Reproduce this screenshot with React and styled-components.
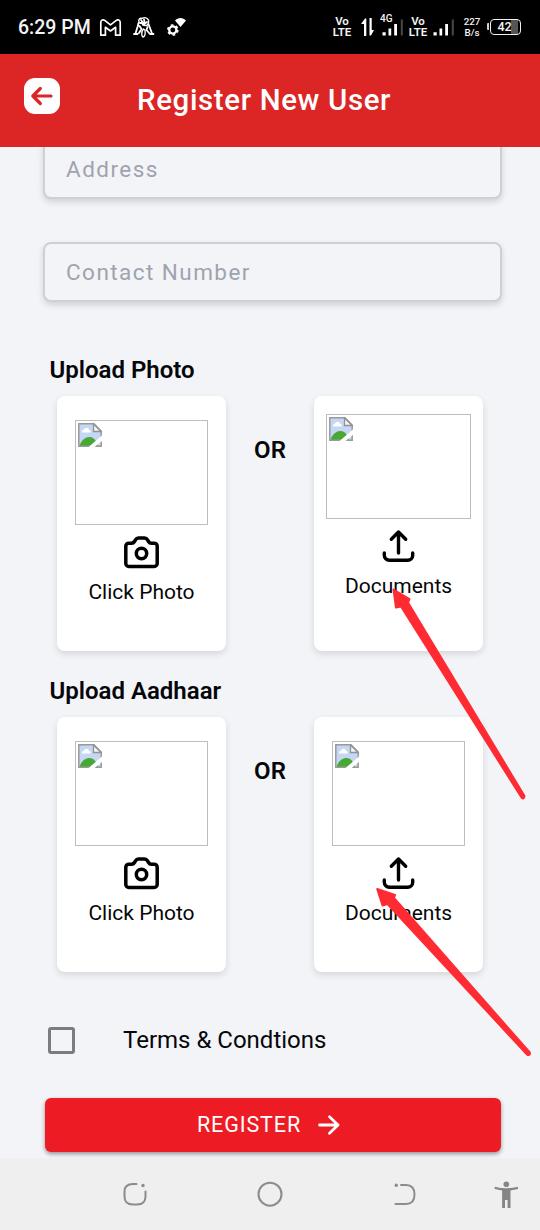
import React from 'react';
import styled, { createGlobalStyle } from 'styled-components';

const Global = createGlobalStyle`
  * { box-sizing: border-box; }
  body { margin: 0; background: #f3f4f8; font-family: Roboto, "Liberation Sans", sans-serif; color: #050608; }
  svg { display: block; flex: none; overflow: visible; }
`;

const Screen = styled.div`
  position: relative;
  width: 540px;
  height: 1230px;
  display: flex;
  flex-direction: column;
  overflow: hidden;
  background: #f3f4f8;
`;

const StatusBar = styled.div`
  height: 54px;
  flex: none;
  display: flex;
  align-items: center;
  justify-content: space-between;
  padding: 0 19px 0 18px;
  background: #000;
  color: #f4f4f4;
`;

const StatusGroup = styled.div`
  display: flex;
  align-items: center;
`;

const Clock = styled.span`
  width: 82px;
  font-size: 19.5px;
  font-weight: 500;
  line-height: 24px;
  white-space: nowrap;
  padding-top: 1px;
`;

const Glyph = styled.svg`
  margin-right: ${(p) => p.$gap || 0}px;
`;

const Volte = styled.span`
  width: 20px;
  margin-right: ${(p) => p.$gap}px;
  display: flex;
  flex-direction: column;
  align-items: center;
  font-size: 11.5px;
  font-weight: 600;
  line-height: 11px;
`;

const Signal = styled.div`
  position: relative;
  margin-right: ${(p) => p.$gap}px;
`;

const Generation = styled.span`
  position: absolute;
  left: -2px;
  top: -3px;
  font-size: 10px;
  font-weight: 500;
  line-height: 10px;
`;

const Speed = styled.span`
  width: 18px;
  margin-right: 9px;
  font-size: 9.8px;
  font-weight: 500;
  line-height: 11.5px;
  text-align: center;
`;

const Battery = styled.span`
  position: relative;
  width: 31px;
  height: 16px;
  border: 1.5px solid #f0f0f0;
  border-radius: 4px;
  background: linear-gradient(90deg, #000 0 70%, #555 70% 92%, #000 92%);
  font-size: 12.5px;
  font-weight: 500;
  line-height: 14px;
  padding-right: 2px;
  text-align: center;
  &::before {
    content: "";
    position: absolute;
    left: -4px;
    top: 3px;
    width: 2px;
    height: 7px;
    border-radius: 1px 0 0 1px;
    background: #d0d0d0;
  }
`;

const Header = styled.header`
  height: 93px;
  flex: none;
  display: flex;
  align-items: flex-start;
  padding: 24px;
  background: #dc2626;
`;

const BackButton = styled.button`
  width: 36px;
  height: 36px;
  padding: 0;
  border: 0;
  border-radius: 11px;
  background: #fff;
`;

const Title = styled.h1`
  margin: 5px 0 0 77px;
  font-size: 29.4px;
  font-weight: 500;
  line-height: 34px;
  letter-spacing: 0.66px;
  color: #fff;
  white-space: nowrap;
`;

const Content = styled.main`
  flex: 1;
  min-height: 0;
  overflow: hidden;
  display: flex;
  flex-direction: column;
`;

const Fields = styled.div`
  display: flex;
  flex-direction: column;
  gap: 43px;
  margin: -8px 38px 0 43px;
`;

const Field = styled.input`
  width: 100%;
  height: 60px;
  padding: 0 21px 1px;
  border: 2px solid #cfd0d5;
  border-radius: 8px;
  outline: 0;
  background: #f3f4f8;
  box-shadow: 0 3px 6px rgba(0, 0, 0, 0.14);
  font: 400 22.5px/30px Roboto, sans-serif;
  letter-spacing: 1.45px;
  &::placeholder { color: #9ea3ae; opacity: 1; }
`;

const Upload = styled.section`
  margin-top: ${(p) => p.$top}px;
  padding-left: 50px;
`;

const SectionTitle = styled.h2`
  margin: 0 0 0 -0.5px;
  font-size: 24px;
  font-weight: 600;
  line-height: 30px;
  white-space: nowrap;
`;

const Choices = styled.div`
  display: flex;
  margin: 11px 0 0 7px;
`;

const Card = styled.div`
  width: 169px;
  height: 255px;
  padding-top: ${(p) => p.$top}px;
  display: flex;
  flex-direction: column;
  align-items: center;
  border-radius: 8px;
  background: #fff;
  box-shadow: 0 3px 7px rgba(0, 0, 0, 0.12);
`;

const Or = styled.span`
  width: 88px;
  padding-top: 39px;
  font-size: 24px;
  font-weight: 600;
  line-height: 30px;
  text-align: center;
`;

const Preview = styled.div`
  width: ${(p) => p.$width}px;
  height: 105px;
  padding: 2px;
  border: 1.5px solid #bdbdbd;
`;

const ActionIcon = styled.svg`
  margin-top: 6px;
`;

const CardLabel = styled.span`
  margin-top: 10px;
  font-size: 21px;
  line-height: 26px;
  white-space: nowrap;
`;

const Terms = styled.label`
  height: 30px;
  margin: 53px 0 0 48px;
  display: flex;
  align-items: center;
  gap: 48px;
  font-size: 24px;
  line-height: 30px;
`;

const Checkbox = styled.input`
  appearance: none;
  width: 27px;
  height: 27px;
  margin: 0;
  border: 3px solid #7b7c80;
  border-radius: 3px;
`;

const Register = styled.button`
  height: 54px;
  flex: none;
  margin: 43px 39px 0 45px;
  padding: 0 9px 0 0;
  display: flex;
  align-items: center;
  justify-content: center;
  gap: 17px;
  border: 0;
  border-radius: 6px;
  background: #ed1c24;
  box-shadow: 0 2px 4px rgba(0, 0, 0, 0.4);
  color: #fff;
  font: 400 21.5px/28px Roboto, sans-serif;
  letter-spacing: 0.9px;
`;

const NavBar = styled.nav`
  height: 72px;
  flex: none;
  display: flex;
  align-items: center;
  padding-left: 121px;
  background: #efefef;
`;

const Annotations = styled.svg`
  position: absolute;
  inset: 0;
  pointer-events: none;
`;

const BrokenImage = () => (
  <svg width="24" height="24" viewBox="0 0 24 24">
    <path d="M.8.8H16l7.2 7.2v15.2H.8z" fill="#c5d7f5" />
    <path d="M4 9.500C3.500 7.500 5 6.500 6 6.800 6.500 4 11 4 11 7c2-.3 2.500 2.500.7 2.500z" fill="#fff" />
    <path d="M1.600 23C3 17 8 13.500 12 14c3 .3 6 2 8 9z" fill="#47a832" />
    <path d="M.8.8H16l7.200 7.200v15.200H.8z" fill="none" stroke="#9a9a9a" strokeWidth="1.500" />
    <path d="M15.500 1v7.500H23z" fill="#f6f6f6" stroke="#929292" strokeWidth="1.300" />
    <path d="M10 24.500 24.500 12V17.500L16 24.500z" fill="#fff" />
  </svg>
);

const CameraIcon = () => (
  <ActionIcon width="35" height="38" viewBox="0.5 0 35 38" fill="none" stroke="#000" strokeWidth="3.500" strokeLinejoin="round">
    <path d="M5.300 12.200H8c1.500 0 2.300-.5 3-1.700l1-1.700c.7-1.200 1.500-1.700 3-1.700h6c1.500 0 2.300.5 3 1.700l1 1.700c.7 1.200 1.500 1.700 3 1.700h2.700a3 3 0 0 1 3 3v17.300a3 3 0 0 1-3 3H5.300a3 3 0 0 1-3-3V15.200a3 3 0 0 1 3-3z" />
    <circle cx="18" cy="22.500" r="5.200" />
  </ActionIcon>
);

const UploadIcon = () => (
  <ActionIcon width="35" height="38" viewBox="0.5 0 35 38" fill="none" stroke="#000" strokeWidth="3.400" strokeLinecap="round" strokeLinejoin="round">
    <path d="M18 28V7M10.800 14.200 18 7l7.200 7.200M3.800 28v2.200a5 5 0 0 0 5 5h18.400a5 5 0 0 0 5-5V28" />
  </ActionIcon>
);

function UploadGroup({ title, top, documentTop, documentWidth }) {
  return (
    <Upload $top={top}>
      <SectionTitle>{title}</SectionTitle>
      <Choices>
        <Card $top={24}>
          <Preview $width={133}><BrokenImage /></Preview>
          <CameraIcon />
          <CardLabel>Click Photo</CardLabel>
        </Card>
        <Or>OR</Or>
        <Card $top={documentTop}>
          <Preview $width={documentWidth}><BrokenImage /></Preview>
          <UploadIcon />
          <CardLabel>Documents</CardLabel>
        </Card>
      </Choices>
    </Upload>
  );
}

const Bars = () => (
  <svg width="21" height="20" viewBox="0 0 21 20">
    <path d="M.500 15.300h3.200v3.200H.500zM6.500 11.500h2.700v7H6.500zM12.200 7h2.800v11.500h-2.800z" fill="#fff" />
    <path d="M18.800 2.500h2v16h-2z" fill="#484848" />
  </svg>
);

export default function App() {
  return (
    <>
      <Global />
      <Screen>
        <StatusBar>
          <StatusGroup>
            <Clock>6:29 PM</Clock>
            <Glyph $gap={12} width="21" height="17" viewBox="0 0 21 17" fill="none" stroke="#fff" strokeWidth="1.700" strokeLinejoin="round">
              <path d="M.8 3.200C.8.800 3.200.200 4.700 1.400l5.800 4.500 5.800-4.500c1.500-1.200 3.900-.6 3.900 1.800v13h-4.600V8.300L10.500 12 5.400 8.300v7.900H.8z" />
            </Glyph>
            <Glyph $gap={13} width="21" height="21" viewBox="0 0 21 21" fill="none" stroke="#fff" strokeWidth="1.400" strokeLinecap="round" strokeLinejoin="round">
              <path d="M6 5C5 2.500 7 .5 9 1.500 12-.5 16.500 1.500 15.500 5.500c0 3-2.500 3.500-4.500 2.500z" />
              <path d="M8 3 9.500 5M11 2.500 11.500 5M7 6h3.500M10 8l4-3" strokeWidth="1.800" />
              <path d="M5.500 6 4.500 10 2.500 16.500M1 17h3.500M6.500 9l2 3-2.500 4M15.500 7l1.500 4 2 5.500M17 17h3.500M14.500 10 13.500 13l3 3.500" strokeWidth="1.800" />
              <path d="M10.500 12c-2 2-2.500 7-.5 8 2-.5 2.500-3 2-7z" />
            </Glyph>
            <Glyph width="20" height="20" viewBox="0 0 20 20">
              <path d="M8 3.500c3-3.500 8-3.500 11 0L13.500 10z" fill="#fff" />
              <circle cx="5.800" cy="13" r="3.600" fill="none" stroke="#fff" strokeWidth="2.300" />
              <circle cx="5.800" cy="13" r="5" fill="none" stroke="#fff" strokeWidth="1.700" strokeDasharray="2.600 2.636" />
            </Glyph>
          </StatusGroup>
          <StatusGroup>
            <Volte $gap={9}><span>Vo</span><span>LTE</span></Volte>
            <Glyph $gap={8} width="13" height="18" viewBox="0 0 13 18" fill="#fff">
              <path d="M3 18V6H0L4 .5H5.300V18zM8.500 0h2.200v12h2.300l-3 5.500H8.500z" />
            </Glyph>
            <Signal $gap={5}><Generation>4G</Generation><Bars /></Signal>
            <Volte $gap={5}><span>Vo</span><span>LTE</span></Volte>
            <Signal $gap={9}><Bars /></Signal>
            <Speed>227<br />B/s</Speed>
            <Battery>42</Battery>
          </StatusGroup>
        </StatusBar>
        <Header>
          <BackButton aria-label="Back">
            <svg width="36" height="36" viewBox="0 0 36 36" fill="none" stroke="#dc2626" strokeWidth="3.200" strokeLinecap="round" strokeLinejoin="round">
              <path d="M27 18H8.800M16.300 10.500 8.800 18l7.500 7.500" />
            </svg>
          </BackButton>
          <Title>Register New User</Title>
        </Header>
        <Content>
          <Fields>
            <Field placeholder="Address" />
            <Field placeholder="Contact Number" />
          </Fields>
          <UploadGroup title="Upload Photo" top={53} documentTop={18} documentWidth={145} />
          <UploadGroup title="Upload Aadhaar" top={25} documentTop={24} documentWidth={133} />
          <Terms><Checkbox type="checkbox" />Terms &amp; Condtions</Terms>
          <Register>
            REGISTER
            <svg width="22" height="20" viewBox="0 0 22 20" fill="none" stroke="#fff" strokeWidth="2.800" strokeLinecap="round" strokeLinejoin="round">
              <path d="M1.500 10h18.500M11.500 1.800 20 10l-8.500 8.200" />
            </svg>
          </Register>
        </Content>
        <NavBar>
          <Glyph $gap={108} width="27" height="27" viewBox="0 0 27 27" fill="none" stroke="#8c8c8c" strokeWidth="2" strokeLinecap="round">
            <path d="M15.500 3H12c-6 0-8.500 2.500-8.500 7.500v5c0 5.500 2.500 8 8.500 8h4c6 0 8.500-2.500 8.500-8v-5" />
            <circle cx="22" cy="4.500" r="1.700" fill="#8c8c8c" stroke="none" />
          </Glyph>
          <Glyph $gap={108} width="27" height="27" viewBox="0 0 27 27" fill="none" stroke="#8c8c8c" strokeWidth="2">
            <circle cx="14" cy="13.200" r="11.500" />
          </Glyph>
          <Glyph $gap={76} width="27" height="27" viewBox="0 0 27 27" fill="none" stroke="#8c8c8c" strokeWidth="2" strokeLinecap="round">
            <path d="M10 4h5c6 0 8.500 3 8.500 9.500S21 23 15 23H4.500" />
            <circle cx="5.300" cy="4.200" r="1.700" fill="#8c8c8c" stroke="none" />
          </Glyph>
          <Glyph width="24" height="27" viewBox="0 0 24 27" fill="#858585">
            <circle cx="12.300" cy="3.200" r="2.800" />
            <path d="M.8 5.700Q12.300 8.700 23.800 5.700L24 8Q20 9 16.500 9.400V27h-2.900v-8H11v8H8.100V9.400Q4.600 9 .6 8z" />
          </Glyph>
        </NavBar>
        <Annotations width="540" height="1230" viewBox="0 0 540 1230" fill="#ff2b33" stroke="#ff2b33" strokeWidth="2" strokeLinejoin="round">
          <path d="M393.500 589.500 396 607.500 401 606.500 521.500 797.500Q524 800 524.500 796L408 602.500 409.500 599z" />
          <path d="M377.200 889 382.500 905.500 387.500 904 527 1054.500Q530.500 1056 529.800 1052.500L394 898 395 895z" />
        </Annotations>
      </Screen>
    </>
  );
}
